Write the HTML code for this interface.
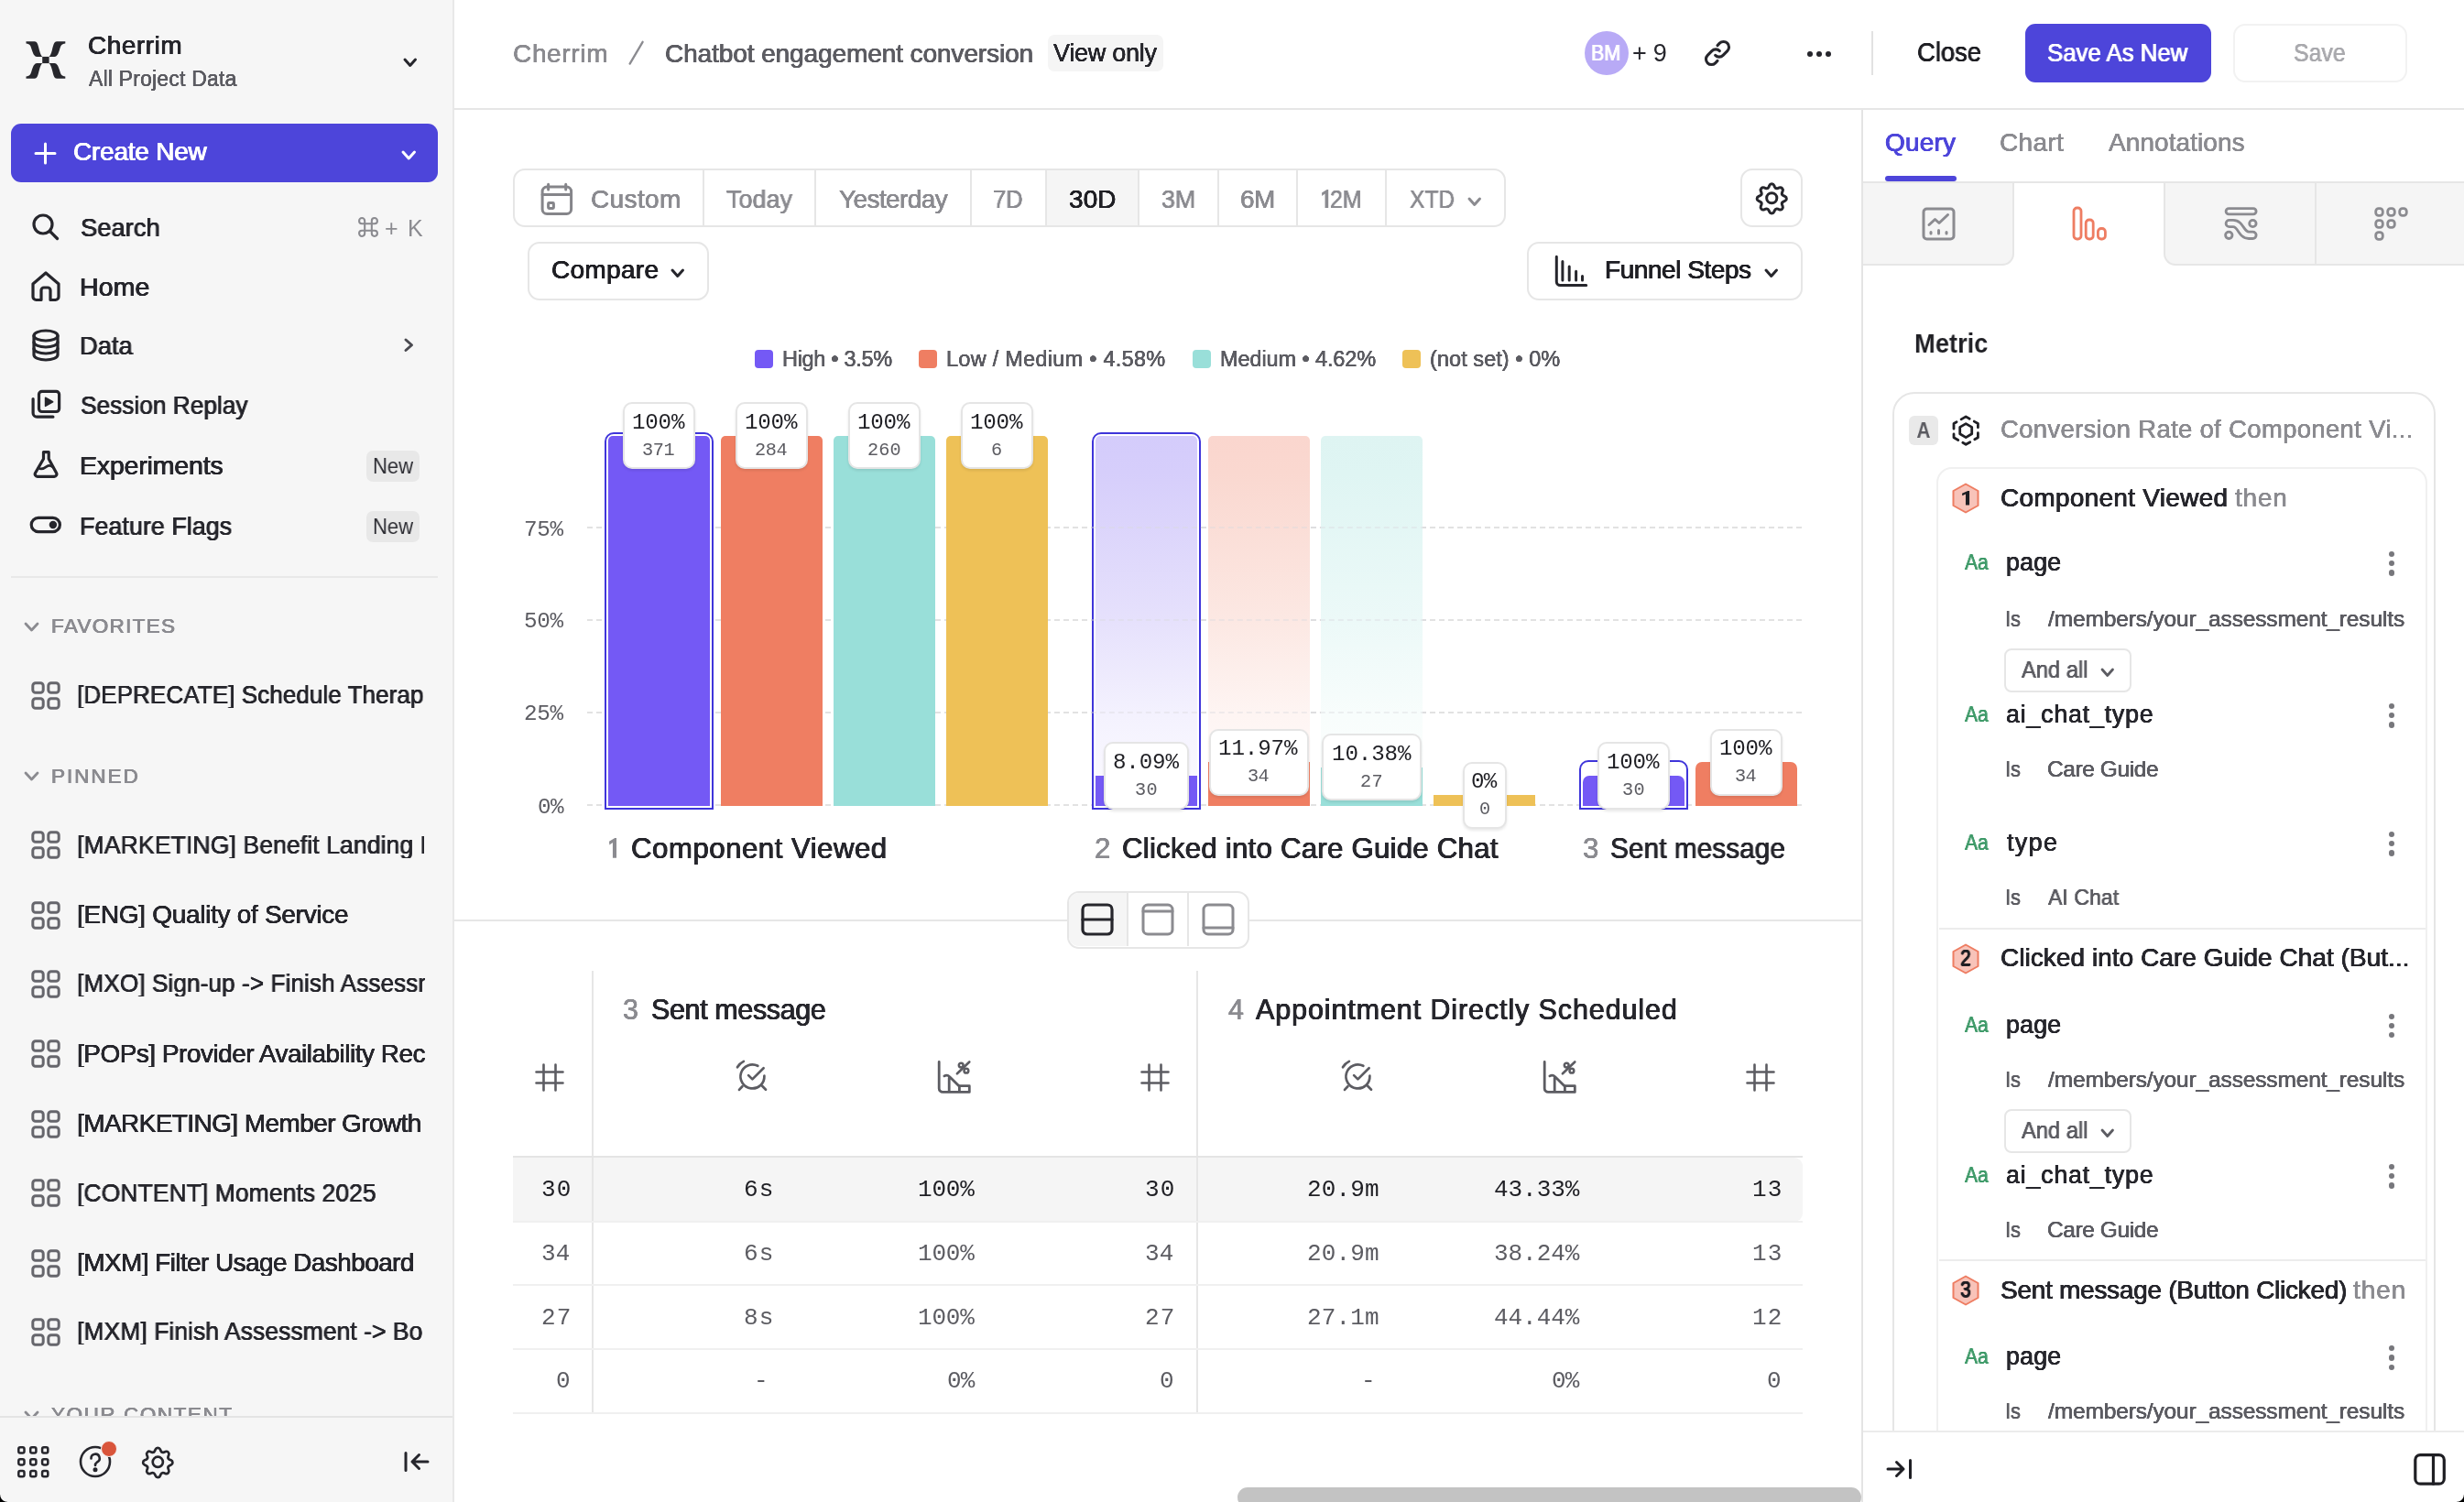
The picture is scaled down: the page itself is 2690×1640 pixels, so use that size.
<!DOCTYPE html>
<html lang="en"><head><meta charset="utf-8"><title>Chatbot engagement conversion</title>
<style>
html,body{margin:0;padding:0;}
html{width:2690px;height:1640px;overflow:hidden;}
body{width:2690px;height:1640px;position:relative;overflow:hidden;background:#fff;
font-family:"Liberation Sans",sans-serif;}
.a{position:absolute;}
.t{will-change:transform;position:absolute;white-space:pre;line-height:1;font-family:"Liberation Sans",sans-serif;}
.m{font-family:"Liberation Mono",monospace;}
svg{overflow:visible;}
</style></head><body>
<div class="a" style="left:0px;top:0px;width:494px;height:1640px;background:#f6f6f6;"></div>
<div class="a" style="left:494px;top:0px;width:2px;height:1640px;background:#e8e8e8;"></div>
<svg class="a" style="left:28.2px;top:45px;" width="43.8" height="41" viewBox="0 0 43.8 41" fill="#27272c"><path d="M0.5 0.3 H9.6 C13.2 0.3 13.6 5 15 10 C16 13.6 17 16 18.3 17 H12.4 C9 16.6 8 13 6.8 9.5 C5.6 5.2 5 2.9 0.5 2.5 Z"/><g transform="translate(43.8 0) scale(-1 1)"><path d="M0.5 0.3 H9.6 C13.2 0.3 13.6 5 15 10 C16 13.6 17 16 18.3 17 H12.4 C9 16.6 8 13 6.8 9.5 C5.6 5.2 5 2.9 0.5 2.5 Z"/></g><g transform="translate(0 41) scale(1 -1)"><path d="M0.5 0.3 H9.6 C13.2 0.3 13.6 5 15 10 C16 13.6 17 16 18.3 17 H12.4 C9 16.6 8 13 6.8 9.5 C5.6 5.2 5 2.9 0.5 2.5 Z"/></g><g transform="translate(43.8 41) scale(-1 -1)"><path d="M0.5 0.3 H9.6 C13.2 0.3 13.6 5 15 10 C16 13.6 17 16 18.3 17 H12.4 C9 16.6 8 13 6.8 9.5 C5.6 5.2 5 2.9 0.5 2.5 Z"/></g><rect x="18.2" y="16.9" width="7.4" height="7.2"/></svg>
<svg class="a" style="left:439.25px;top:61.75px;" width="17.5" height="12.5" viewBox="0 0 17.5 12.5" fill="none" stroke="#26262c" stroke-width="3" stroke-linecap="round" stroke-linejoin="round"><path d="M3 3 L8.75 9.5 L14.5 3"/></svg>
<div class="a" style="left:12px;top:135px;width:466px;height:64px;background:#4d45da;border-radius:11px;"></div>
<svg class="a" style="left:38px;top:156px;" width="23" height="23" viewBox="0 0 23 23" fill="none" stroke="#fff" stroke-width="3" stroke-linecap="round" stroke-linejoin="round"><path d="M11.5 1 V22 M1 11.5 H22"/></svg>
<svg class="a" style="left:436.75px;top:163.0px;" width="18.5" height="13" viewBox="0 0 18.5 13" fill="none" stroke="#fff" stroke-width="3" stroke-linecap="round" stroke-linejoin="round"><path d="M3 3 L9.25 10 L15.5 3"/></svg>
<svg class="a" style="left:35px;top:233px;" width="30" height="30" viewBox="0 0 30 30" fill="none" stroke="#26262c" stroke-width="3.2" stroke-linecap="round" stroke-linejoin="round"><circle cx="12" cy="12" r="10"/><path d="M19.5 19.5 L27.5 27.5"/></svg>
<svg class="a" style="left:389.5px;top:235.5px;" width="24" height="24" viewBox="0 0 22 22" fill="none" stroke="#8b8b90" stroke-width="1.9" stroke-linecap="round" stroke-linejoin="round"><path d="M7.5 7.5 H14.5 V14.5 H7.5 Z M7.5 7.5 V4.7 A2.8 2.8 0 1 0 4.7 7.5 H7.5 M14.5 7.5 H17.3 A2.8 2.8 0 1 0 14.5 4.7 V7.5 M14.5 14.5 V17.3 A2.8 2.8 0 1 0 17.3 14.5 H14.5 M7.5 14.5 H4.7 A2.8 2.8 0 1 0 7.5 17.3 V14.5"/></svg>
<svg class="a" style="left:33px;top:295px;" width="34" height="36" viewBox="0 0 34 36" fill="none" stroke="#26262c" stroke-width="3.2" stroke-linecap="round" stroke-linejoin="round"><path d="M3 15 L17 3 L31 15 V29 A3.5 3.5 0 0 1 27.5 32.5 H22 V22 A3 3 0 0 0 19 19 H15 A3 3 0 0 0 12 22 V32.5 H6.5 A3.5 3.5 0 0 1 3 29 Z"/></svg>
<svg class="a" style="left:34px;top:359px;" width="32" height="36" viewBox="0 0 32 36" fill="none" stroke="#26262c" stroke-width="3.2" stroke-linecap="round" stroke-linejoin="round"><ellipse cx="16" cy="7.5" rx="13" ry="5.5"/><path d="M3 7.5 V28.5 C3 31.5 8.8 34 16 34 S29 31.5 29 28.5 V7.5"/><path d="M3 14.5 C3 17.5 8.8 20 16 20 S29 17.5 29 14.5"/><path d="M3 21.5 C3 24.5 8.8 27 16 27 S29 24.5 29 21.5"/></svg>
<svg class="a" style="left:439.75px;top:368.25px;" width="12.5" height="17.5" viewBox="0 0 12.5 17.5" fill="none" stroke="#4a4a50" stroke-width="3" stroke-linecap="round" stroke-linejoin="round"><path d="M3 3 L9.5 8.75 L3 14.5"/></svg>
<svg class="a" style="left:33px;top:424px;" width="36" height="36" viewBox="0 0 36 36" fill="none" stroke="#26262c" stroke-width="3.2" stroke-linecap="round" stroke-linejoin="round"><rect x="9.5" y="3.4" width="22.1" height="22.1" rx="3.2"/><path d="M16.6 10.3 L24.6 14.8 L16.6 19.3 Z" fill="#26262c" stroke-width="1.6"/><path d="M3.1 11.5 V27 A4.2 4.2 0 0 0 7.3 31.2 H24.9"/></svg>
<svg class="a" style="left:34px;top:490px;" width="32" height="34" viewBox="0 0 32 34" fill="none" stroke="#26262c" stroke-width="3.2" stroke-linecap="round" stroke-linejoin="round"><path d="M13.5 3.6 H19.2 V11 L27.6 26.5 A2.6 2.6 0 0 1 25.3 30.3 H6.8 A2.6 2.6 0 0 1 4.5 26.5 L13.5 11 Z"/><path d="M8.2 21 C11 23.2 14 21.5 17 19.3 C19 18 21.5 18.3 23.6 20" stroke-width="2.8"/></svg>
<svg class="a" style="left:32px;top:563px;" width="36" height="22" viewBox="0 0 36 22" fill="none" stroke="#26262c" stroke-width="3.2" stroke-linecap="round" stroke-linejoin="round"><rect x="2.2" y="2.3" width="31.2" height="15.4" rx="7.7"/><circle cx="25.9" cy="10" r="4.2" fill="#26262c" stroke="none"/></svg>
<div class="a" style="left:400px;top:492.3px;width:58px;height:33.8px;background:#e8e8e8;border-radius:7px;"></div>
<div class="a" style="left:400px;top:558.1px;width:58px;height:33.8px;background:#e8e8e8;border-radius:7px;"></div>
<div class="a" style="left:12px;top:628.5px;width:466px;height:2px;background:#e8e8e8;"></div>
<svg class="a" style="left:24.5px;top:677.5px;" width="19" height="13" viewBox="0 0 19 13" fill="none" stroke="#8b8b90" stroke-width="2.8" stroke-linecap="round" stroke-linejoin="round"><path d="M3 3 L9.5 10 L16 3"/></svg>
<svg class="a" style="left:24.5px;top:841.2px;" width="19" height="13" viewBox="0 0 19 13" fill="none" stroke="#8b8b90" stroke-width="2.8" stroke-linecap="round" stroke-linejoin="round"><path d="M3 3 L9.5 10 L16 3"/></svg>
<svg class="a" style="left:34px;top:743.8px;" width="32" height="31" viewBox="0 0 32 31" fill="none" stroke="#66666c" stroke-width="3" stroke-linecap="round" stroke-linejoin="round"><rect x="1.8" y="1.8" width="11.4" height="10.4" rx="3"/><rect x="18.8" y="1.8" width="11.4" height="10.4" rx="3"/><rect x="1.8" y="18.8" width="11.4" height="10.4" rx="3"/><rect x="18.8" y="18.8" width="11.4" height="10.4" rx="3"/></svg>
<svg class="a" style="left:34px;top:907.3px;" width="32" height="31" viewBox="0 0 32 31" fill="none" stroke="#66666c" stroke-width="3" stroke-linecap="round" stroke-linejoin="round"><rect x="1.8" y="1.8" width="11.4" height="10.4" rx="3"/><rect x="18.8" y="1.8" width="11.4" height="10.4" rx="3"/><rect x="1.8" y="18.8" width="11.4" height="10.4" rx="3"/><rect x="18.8" y="18.8" width="11.4" height="10.4" rx="3"/></svg>
<svg class="a" style="left:34px;top:983.5px;" width="32" height="31" viewBox="0 0 32 31" fill="none" stroke="#66666c" stroke-width="3" stroke-linecap="round" stroke-linejoin="round"><rect x="1.8" y="1.8" width="11.4" height="10.4" rx="3"/><rect x="18.8" y="1.8" width="11.4" height="10.4" rx="3"/><rect x="1.8" y="18.8" width="11.4" height="10.4" rx="3"/><rect x="18.8" y="18.8" width="11.4" height="10.4" rx="3"/></svg>
<svg class="a" style="left:34px;top:1059px;" width="32" height="31" viewBox="0 0 32 31" fill="none" stroke="#66666c" stroke-width="3" stroke-linecap="round" stroke-linejoin="round"><rect x="1.8" y="1.8" width="11.4" height="10.4" rx="3"/><rect x="18.8" y="1.8" width="11.4" height="10.4" rx="3"/><rect x="1.8" y="18.8" width="11.4" height="10.4" rx="3"/><rect x="18.8" y="18.8" width="11.4" height="10.4" rx="3"/></svg>
<svg class="a" style="left:34px;top:1135.3px;" width="32" height="31" viewBox="0 0 32 31" fill="none" stroke="#66666c" stroke-width="3" stroke-linecap="round" stroke-linejoin="round"><rect x="1.8" y="1.8" width="11.4" height="10.4" rx="3"/><rect x="18.8" y="1.8" width="11.4" height="10.4" rx="3"/><rect x="1.8" y="18.8" width="11.4" height="10.4" rx="3"/><rect x="18.8" y="18.8" width="11.4" height="10.4" rx="3"/></svg>
<svg class="a" style="left:34px;top:1211.9px;" width="32" height="31" viewBox="0 0 32 31" fill="none" stroke="#66666c" stroke-width="3" stroke-linecap="round" stroke-linejoin="round"><rect x="1.8" y="1.8" width="11.4" height="10.4" rx="3"/><rect x="18.8" y="1.8" width="11.4" height="10.4" rx="3"/><rect x="1.8" y="18.8" width="11.4" height="10.4" rx="3"/><rect x="18.8" y="18.8" width="11.4" height="10.4" rx="3"/></svg>
<svg class="a" style="left:34px;top:1287.4px;" width="32" height="31" viewBox="0 0 32 31" fill="none" stroke="#66666c" stroke-width="3" stroke-linecap="round" stroke-linejoin="round"><rect x="1.8" y="1.8" width="11.4" height="10.4" rx="3"/><rect x="18.8" y="1.8" width="11.4" height="10.4" rx="3"/><rect x="1.8" y="18.8" width="11.4" height="10.4" rx="3"/><rect x="18.8" y="18.8" width="11.4" height="10.4" rx="3"/></svg>
<svg class="a" style="left:34px;top:1363.6px;" width="32" height="31" viewBox="0 0 32 31" fill="none" stroke="#66666c" stroke-width="3" stroke-linecap="round" stroke-linejoin="round"><rect x="1.8" y="1.8" width="11.4" height="10.4" rx="3"/><rect x="18.8" y="1.8" width="11.4" height="10.4" rx="3"/><rect x="1.8" y="18.8" width="11.4" height="10.4" rx="3"/><rect x="18.8" y="18.8" width="11.4" height="10.4" rx="3"/></svg>
<svg class="a" style="left:34px;top:1439px;" width="32" height="31" viewBox="0 0 32 31" fill="none" stroke="#66666c" stroke-width="3" stroke-linecap="round" stroke-linejoin="round"><rect x="1.8" y="1.8" width="11.4" height="10.4" rx="3"/><rect x="18.8" y="1.8" width="11.4" height="10.4" rx="3"/><rect x="1.8" y="18.8" width="11.4" height="10.4" rx="3"/><rect x="18.8" y="18.8" width="11.4" height="10.4" rx="3"/></svg>
<div class="a" style="left:0;top:1520px;width:494px;height:26px;overflow:hidden;"><svg class="a" style="left:25px;top:19px" width="19" height="13" viewBox="0 0 19 13" fill="none" stroke="#8b8b90" stroke-width="2.8" stroke-linecap="round" stroke-linejoin="round"><path d="M3 3 L9.5 10 L16 3"/></svg><span class="t" style="left:55.7px;top:13.8px;font-size:22.5px;color:#8b8b90;letter-spacing:1.55px;text-shadow:0.35px 0 0 #8b8b90,-0.35px 0 0 #8b8b90,0 0.35px 0 #8b8b90,0 -0.35px 0 #8b8b90;">YOUR CONTENT</span></div>
<div class="a" style="left:0px;top:1546px;width:494px;height:2px;background:#e4e4e4;"></div>
<div class="a" style="left:0px;top:1548px;width:494px;height:92px;background:#f6f6f6;"></div>
<svg class="a" style="left:18.5px;top:1579px;" width="36" height="35" viewBox="0 0 36 35" fill="none" stroke="#26262c" stroke-width="2.5" stroke-linecap="round" stroke-linejoin="round"><rect x="1.3" y="1.3" width="6.2" height="6.2" rx="1.8"/><rect x="14.200000000000001" y="1.3" width="6.2" height="6.2" rx="1.8"/><rect x="27.1" y="1.3" width="6.2" height="6.2" rx="1.8"/><rect x="1.3" y="14.200000000000001" width="6.2" height="6.2" rx="1.8"/><rect x="14.200000000000001" y="14.200000000000001" width="6.2" height="6.2" rx="1.8"/><rect x="27.1" y="14.200000000000001" width="6.2" height="6.2" rx="1.8"/><rect x="1.3" y="27.1" width="6.2" height="6.2" rx="1.8"/><rect x="14.200000000000001" y="27.1" width="6.2" height="6.2" rx="1.8"/><rect x="27.1" y="27.1" width="6.2" height="6.2" rx="1.8"/></svg>
<svg class="a" style="left:86px;top:1578px;" width="36" height="36" viewBox="0 0 36 36" fill="none" stroke="#26262c" stroke-width="2.6" stroke-linecap="round" stroke-linejoin="round"><circle cx="18" cy="18" r="16"/><path d="M13.5 14.5 A4.6 4.6 0 1 1 20 18.5 C18.5 19.5 18 20.3 18 22"/><circle cx="18" cy="26.8" r="1.2" fill="#26262c"/></svg>
<div class="a" style="left:109.5px;top:1573px;width:18px;height:18px;background:#d9553b;border-radius:9px;border:1px solid #f6f6f6;box-sizing:border-box;"></div>
<svg class="a" style="left:153.7px;top:1577.8px;" width="36.6" height="36.6" viewBox="0 0 34 34" fill="none" stroke="#26262c" stroke-width="2.5" stroke-linecap="round" stroke-linejoin="round"><path d="M19.4 4.2 a2.6 2.6 0 0 0 -4.8 0 l-0.6 1.5 a2.6 2.6 0 0 1 -3.2 1.4 l-1.5 -0.6 a2.6 2.6 0 0 0 -3.4 3.4 l0.6 1.5 a2.6 2.6 0 0 1 -1.4 3.2 l-1.5 0.6 a2.6 2.6 0 0 0 0 4.8 l1.5 0.6 a2.6 2.6 0 0 1 1.4 3.2 l-0.6 1.5 a2.6 2.6 0 0 0 3.4 3.4 l1.5 -0.6 a2.6 2.6 0 0 1 3.2 1.4 l0.6 1.5 a2.6 2.6 0 0 0 4.8 0 l0.6 -1.5 a2.6 2.6 0 0 1 3.2 -1.4 l1.5 0.6 a2.6 2.6 0 0 0 3.4 -3.4 l-0.6 -1.5 a2.6 2.6 0 0 1 1.4 -3.2 l1.5 -0.6 a2.6 2.6 0 0 0 0 -4.8 l-1.5 -0.6 a2.6 2.6 0 0 1 -1.4 -3.2 l0.6 -1.5 a2.6 2.6 0 0 0 -3.4 -3.4 l-1.5 0.6 a2.6 2.6 0 0 1 -3.2 -1.4 Z"/><circle cx="17" cy="17" r="5.2"/></svg>
<svg class="a" style="left:441px;top:1585px;" width="28" height="22" viewBox="0 0 28 22" fill="none" stroke="#26262c" stroke-width="3" stroke-linecap="round" stroke-linejoin="round"><path d="M2 1.5 V20.5 M26 11 H9 M16.5 3.5 L9 11 L16.5 18.5"/></svg>
<div class="a" style="left:496px;top:118px;width:2194px;height:2px;background:#e6e6e6;"></div>
<svg class="a" style="left:685px;top:43px;" width="20" height="30" viewBox="0 0 20 30" fill="none" stroke="#8b8b90" stroke-width="2.3" stroke-linecap="round" stroke-linejoin="round"><path d="M16.6 2.8 L2.6 26.6"/></svg>
<div class="a" style="left:1143.8px;top:38px;width:126px;height:40px;background:#f5f5f5;border-radius:7px;"></div>
<div class="a" style="left:1729.8px;top:33.8px;width:48px;height:48px;background:#b8aaf6;border-radius:24px;"></div>
<svg class="a" style="left:1860px;top:43.2px;" width="30" height="30" viewBox="0 0 32 32" fill="none" stroke="#26262c" stroke-width="3.3" stroke-linecap="round" stroke-linejoin="round"><path d="M13.5 18.5 a6.3 6.3 0 0 0 9 0 l5 -5 a6.3 6.3 0 0 0 -9 -9 l-2.5 2.5"/><path d="M18.5 13.5 a6.3 6.3 0 0 0 -9 0 l-5 5 a6.3 6.3 0 0 0 9 9 l2.5 -2.5"/></svg>
<div class="a" style="left:1972.8999999999999px;top:55.8px;width:5.8px;height:5.8px;background:#26262c;border-radius:2.9px;"></div>
<div class="a" style="left:1983.0px;top:55.8px;width:5.8px;height:5.8px;background:#26262c;border-radius:2.9px;"></div>
<div class="a" style="left:1993.1px;top:55.8px;width:5.8px;height:5.8px;background:#26262c;border-radius:2.9px;"></div>
<div class="a" style="left:2043px;top:34px;width:2px;height:48px;background:#e2e2e2;"></div>
<div class="a" style="left:2211px;top:26px;width:203px;height:64px;background:#4d45da;border-radius:11px;"></div>
<div class="a" style="left:2438.2px;top:26px;width:190px;height:64px;background:#fff;border:2px solid #f2f2f2;box-sizing:border-box;border-radius:13px;"></div>
<div class="a" style="left:560px;top:183.8px;width:1084px;height:64px;background:#fff;border:2px solid #e6e6e6;box-sizing:border-box;border-radius:13px;"></div>
<div class="a" style="left:1142px;top:185.8px;width:100px;height:60px;background:#f5f5f5;"></div>
<div class="a" style="left:767px;top:185.5px;width:2px;height:60.5px;background:#e6e6e6;"></div>
<div class="a" style="left:888.8px;top:185.5px;width:2px;height:60.5px;background:#e6e6e6;"></div>
<div class="a" style="left:1059px;top:185.5px;width:2px;height:60.5px;background:#e6e6e6;"></div>
<div class="a" style="left:1140.8px;top:185.5px;width:2px;height:60.5px;background:#e6e6e6;"></div>
<div class="a" style="left:1241.8px;top:185.5px;width:2px;height:60.5px;background:#e6e6e6;"></div>
<div class="a" style="left:1329px;top:185.5px;width:2px;height:60.5px;background:#e6e6e6;"></div>
<div class="a" style="left:1415.3px;top:185.5px;width:2px;height:60.5px;background:#e6e6e6;"></div>
<div class="a" style="left:1511.8px;top:185.5px;width:2px;height:60.5px;background:#e6e6e6;"></div>
<svg class="a" style="left:589px;top:199px;" width="38" height="38" viewBox="0 0 38 38" fill="none" stroke="#85858a" stroke-width="3" stroke-linecap="round" stroke-linejoin="round"><rect x="3.1" y="5.1" width="31.5" height="29.4" rx="5"/><path d="M3.1 13.5 H34.6 M9.6 2.2 V8 M28.7 2.2 V8"/><rect x="9.6" y="22.6" width="5.8" height="5.8" rx="0.8"/></svg>
<svg class="a" style="left:1442.8px;top:207.0px;" width="8.2" height="20.9" viewBox="0 0 8.2 20.9"><path d="M7.20 0.00 L7.20 19.90 L3.54 19.90 L3.54 4.50 L0.30 6.91 L0.00 3.50 L5.59 0.00 Z" fill="#8b8b90"/></svg>
<svg class="a" style="left:1601.25px;top:213.75px;" width="17.5" height="12.5" viewBox="0 0 17.5 12.5" fill="none" stroke="#8b8b90" stroke-width="3" stroke-linecap="round" stroke-linejoin="round"><path d="M3 3 L8.75 9.5 L14.5 3"/></svg>
<div class="a" style="left:1900px;top:183.8px;width:68px;height:64px;background:#fff;border:2px solid #e6e6e6;box-sizing:border-box;border-radius:13px;"></div>
<svg class="a" style="left:1915.6px;top:198px;" width="36.5" height="36.5" viewBox="0 0 34 34" fill="none" stroke="#26262c" stroke-width="2.8" stroke-linecap="round" stroke-linejoin="round"><path d="M19.4 4.2 a2.6 2.6 0 0 0 -4.8 0 l-0.6 1.5 a2.6 2.6 0 0 1 -3.2 1.4 l-1.5 -0.6 a2.6 2.6 0 0 0 -3.4 3.4 l0.6 1.5 a2.6 2.6 0 0 1 -1.4 3.2 l-1.5 0.6 a2.6 2.6 0 0 0 0 4.8 l1.5 0.6 a2.6 2.6 0 0 1 1.4 3.2 l-0.6 1.5 a2.6 2.6 0 0 0 3.4 3.4 l1.5 -0.6 a2.6 2.6 0 0 1 3.2 1.4 l0.6 1.5 a2.6 2.6 0 0 0 4.8 0 l0.6 -1.5 a2.6 2.6 0 0 1 3.2 -1.4 l1.5 0.6 a2.6 2.6 0 0 0 3.4 -3.4 l-0.6 -1.5 a2.6 2.6 0 0 1 1.4 -3.2 l1.5 -0.6 a2.6 2.6 0 0 0 0 -4.8 l-1.5 -0.6 a2.6 2.6 0 0 1 -1.4 -3.2 l0.6 -1.5 a2.6 2.6 0 0 0 -3.4 -3.4 l-1.5 0.6 a2.6 2.6 0 0 1 -3.2 -1.4 Z"/><circle cx="17" cy="17" r="5.2"/></svg>
<div class="a" style="left:576px;top:263.8px;width:198px;height:64px;background:#fff;border:2px solid #e6e6e6;box-sizing:border-box;border-radius:13px;"></div>
<svg class="a" style="left:731.25px;top:292.25px;" width="17.5" height="12.5" viewBox="0 0 17.5 12.5" fill="none" stroke="#26262c" stroke-width="3" stroke-linecap="round" stroke-linejoin="round"><path d="M3 3 L8.75 9.5 L14.5 3"/></svg>
<div class="a" style="left:1667px;top:263.8px;width:301px;height:64px;background:#fff;border:2px solid #e6e6e6;box-sizing:border-box;border-radius:13px;"></div>
<svg class="a" style="left:1696px;top:278px;" width="38" height="37" viewBox="0 0 38 37" fill="none" stroke="#26262c" stroke-width="3" stroke-linecap="round" stroke-linejoin="round"><path d="M3.3 2.3 V29.6 A4 4 0 0 0 7.3 33.6 H35.7"/><path d="M9.9 7.5 V28 M17.2 13 V28 M24.6 18.3 V28 M31.5 23.4 V28" /></svg>
<svg class="a" style="left:1925.25px;top:292.25px;" width="17.5" height="12.5" viewBox="0 0 17.5 12.5" fill="none" stroke="#26262c" stroke-width="3" stroke-linecap="round" stroke-linejoin="round"><path d="M3 3 L8.75 9.5 L14.5 3"/></svg>
<div class="a" style="left:824px;top:382px;width:20px;height:20px;background:#7459f5;border-radius:4px;"></div>
<div class="a" style="left:1003px;top:382px;width:20px;height:20px;background:#ef7e62;border-radius:4px;"></div>
<div class="a" style="left:1302px;top:382px;width:20px;height:20px;background:#99dfd9;border-radius:4px;"></div>
<div class="a" style="left:1530.8px;top:382px;width:20px;height:20px;background:#eec157;border-radius:4px;"></div>
<div class="a" style="left:640.8px;top:574.8px;width:1326px;height:2px;background:repeating-linear-gradient(90deg,#e2e2e2 0 6px,transparent 6px 10px);"></div>
<div class="a" style="left:640.8px;top:675.6px;width:1326px;height:2px;background:repeating-linear-gradient(90deg,#e2e2e2 0 6px,transparent 6px 10px);"></div>
<div class="a" style="left:640.8px;top:776.6px;width:1326px;height:2px;background:repeating-linear-gradient(90deg,#e2e2e2 0 6px,transparent 6px 10px);"></div>
<div class="a" style="left:640.8px;top:878px;width:1326px;height:2px;background:repeating-linear-gradient(90deg,#e2e2e2 0 6px,transparent 6px 10px);"></div>
<div class="a" style="left:659.7px;top:471.90000000000003px;width:119.4px;height:412.2px;background:#fff;border:2px solid #3f35da;box-sizing:border-box;border-radius:10px 10px 0 0;"></div>
<div class="a" style="left:664px;top:475.8px;width:111px;height:404.2px;background:#7459f5;border-radius:5px 5px 0 0;"></div>
<div class="a" style="left:787px;top:475.8px;width:111px;height:404.2px;background:#ef7e62;border-radius:5px 5px 0 0;"></div>
<div class="a" style="left:910px;top:475.8px;width:111px;height:404.2px;background:#99dfd9;border-radius:5px 5px 0 0;"></div>
<div class="a" style="left:1033px;top:475.8px;width:111px;height:404.2px;background:#eec157;border-radius:5px 5px 0 0;"></div>
<div class="a" style="left:680.4px;top:439.2px;width:78.3px;height:73.2px;background:#fff;box-sizing:border-box;border:2px solid #e5e5e5;border-radius:10px;box-shadow:0 2px 3px rgba(0,0,0,0.09);z-index:3;"></div>
<div class="a" style="left:803.4px;top:439.2px;width:78.3px;height:73.2px;background:#fff;box-sizing:border-box;border:2px solid #e5e5e5;border-radius:10px;box-shadow:0 2px 3px rgba(0,0,0,0.09);z-index:3;"></div>
<div class="a" style="left:926.4px;top:439.2px;width:78.3px;height:73.2px;background:#fff;box-sizing:border-box;border:2px solid #e5e5e5;border-radius:10px;box-shadow:0 2px 3px rgba(0,0,0,0.09);z-index:3;"></div>
<div class="a" style="left:1049.3px;top:439.2px;width:78.3px;height:73.2px;background:#fff;box-sizing:border-box;border:2px solid #e5e5e5;border-radius:10px;box-shadow:0 2px 3px rgba(0,0,0,0.09);z-index:3;"></div>
<div class="a" style="left:1192.1000000000001px;top:472.1px;width:119.4px;height:412px;background:#fff;border:2px solid #3f35da;box-sizing:border-box;border-radius:10px 10px 0 0;"></div>
<div class="a" style="left:1196.4px;top:476px;width:111px;height:404px;background:linear-gradient(180deg,#d4ccfb 0%,#d6cefb 10%,#e6e1fc 50%,#f4f2fe 76%,#fcfbff 100%);border-radius:5px 5px 0 0;"></div>
<div class="a" style="left:1319px;top:476px;width:111px;height:404px;background:linear-gradient(180deg,#fad6ce 0%,#fad8d0 10%,#fce8e3 50%,#fef5f3 76%,#fffdfc 100%);border-radius:5px 5px 0 0;"></div>
<div class="a" style="left:1442px;top:476px;width:111px;height:404px;background:linear-gradient(180deg,#def4f2 0%,#dff5f3 10%,#ecf9f8 50%,#f8fdfc 76%,#fefefe 100%);border-radius:5px 5px 0 0;"></div>
<div class="a" style="left:1192px;top:574.8px;width:365px;height:2px;opacity:.4;background:repeating-linear-gradient(90deg,#d9d9de 0 6px,transparent 6px 10px);background-position:-1.2px 0;"></div>
<div class="a" style="left:1192px;top:675.6px;width:365px;height:2px;opacity:.4;background:repeating-linear-gradient(90deg,#d9d9de 0 6px,transparent 6px 10px);background-position:-1.2px 0;"></div>
<div class="a" style="left:1192px;top:776.6px;width:365px;height:2px;opacity:.4;background:repeating-linear-gradient(90deg,#d9d9de 0 6px,transparent 6px 10px);background-position:-1.2px 0;"></div>
<div class="a" style="left:1196.4px;top:847px;width:111px;height:33px;background:#7459f5;border-radius:0px 0px 0 0;"></div>
<div class="a" style="left:1319px;top:832px;width:111px;height:48px;background:#ef7e62;border-radius:0px 0px 0 0;"></div>
<div class="a" style="left:1442px;top:838px;width:111px;height:42px;background:#99dfd9;border-radius:0px 0px 0 0;"></div>
<div class="a" style="left:1564.6px;top:868px;width:111px;height:12px;background:#eec157;border-radius:0px 0px 0 0;"></div>
<div class="a" style="left:1205.1px;top:810.4px;width:92.9px;height:73.2px;background:#fff;box-sizing:border-box;border:2px solid #e5e5e5;border-radius:10px;box-shadow:0 2px 3px rgba(0,0,0,0.09);z-index:3;"></div>
<div class="a" style="left:1320.0px;top:795.6px;width:108.6px;height:73.2px;background:#fff;box-sizing:border-box;border:2px solid #e5e5e5;border-radius:10px;box-shadow:0 2px 3px rgba(0,0,0,0.09);z-index:3;"></div>
<div class="a" style="left:1443.2px;top:801.3px;width:108.6px;height:73.2px;background:#fff;box-sizing:border-box;border:2px solid #e5e5e5;border-radius:10px;box-shadow:0 2px 3px rgba(0,0,0,0.09);z-index:3;"></div>
<div class="a" style="left:1596.8px;top:831.5px;width:47.8px;height:73.2px;background:#fff;box-sizing:border-box;border:2px solid #e5e5e5;border-radius:10px;box-shadow:0 2px 3px rgba(0,0,0,0.09);z-index:3;"></div>
<div class="a" style="left:1723.7px;top:830.4px;width:119.4px;height:53.700000000000045px;background:#fff;border:2px solid #3f35da;box-sizing:border-box;border-radius:10px 10px 0 0;"></div>
<div class="a" style="left:1728px;top:847px;width:111px;height:33px;background:#7459f5;border-radius:7px 7px 0 0;"></div>
<div class="a" style="left:1851px;top:832px;width:111px;height:48px;background:#ef7e62;border-radius:7px 7px 0 0;"></div>
<div class="a" style="left:1744.3px;top:810.4px;width:78.3px;height:73.2px;background:#fff;box-sizing:border-box;border:2px solid #e5e5e5;border-radius:10px;box-shadow:0 2px 3px rgba(0,0,0,0.09);z-index:3;"></div>
<div class="a" style="left:1867.3px;top:795.6px;width:78.3px;height:73.2px;background:#fff;box-sizing:border-box;border:2px solid #e5e5e5;border-radius:10px;box-shadow:0 2px 3px rgba(0,0,0,0.09);z-index:3;"></div>
<svg class="a" style="left:665.0px;top:915.2px;" width="9.0" height="22.7" viewBox="0 0 9.0 22.7"><path d="M8.01 0.00 L8.01 21.70 L3.94 21.70 L3.94 4.90 L0.33 7.53 L0.00 3.82 L6.22 0.00 Z" fill="#8b8b90"/></svg>
<div class="a" style="left:496px;top:1004px;width:1536px;height:2px;background:#e6e6e6;"></div>
<div class="a" style="left:1164.5px;top:972.5px;width:199.5px;height:63.5px;background:#fff;border:2px solid #e6e6e6;box-sizing:border-box;border-radius:13px;"></div>
<div class="a" style="left:1167px;top:975px;width:64px;height:58px;background:#f5f5f5;border-radius:10px 0 0 10px;"></div>
<div class="a" style="left:1230px;top:975px;width:2px;height:58px;background:#e6e6e6;"></div>
<div class="a" style="left:1296px;top:975px;width:2px;height:58px;background:#e6e6e6;"></div>
<svg class="a" style="left:1179.5px;top:986px;" width="36" height="36" viewBox="0 0 36 36" fill="none" stroke="#26262c" stroke-width="3.2" stroke-linecap="round" stroke-linejoin="round"><rect x="2" y="2" width="32" height="32" rx="5"/><path d="M2 18 H34"/></svg>
<svg class="a" style="left:1245.5px;top:986px;" width="36" height="36" viewBox="0 0 36 36" fill="none" stroke="#8b8b90" stroke-width="3" stroke-linecap="round" stroke-linejoin="round"><rect x="2" y="2" width="32" height="32" rx="5"/><path d="M2 9 H34"/></svg>
<svg class="a" style="left:1311.5px;top:986px;" width="36" height="36" viewBox="0 0 36 36" fill="none" stroke="#8b8b90" stroke-width="3" stroke-linecap="round" stroke-linejoin="round"><rect x="2" y="2" width="32" height="32" rx="5"/><path d="M2 27 H34"/></svg>
<div class="a" style="left:560px;top:1264px;width:1408px;height:70px;background:#f5f5f5;border-radius:0 9px 9px 0;"></div>
<div class="a" style="left:646px;top:1060px;width:2px;height:484px;background:#e6e6e6;"></div>
<div class="a" style="left:1306px;top:1060px;width:2px;height:484px;background:#e6e6e6;"></div>
<div class="a" style="left:560px;top:1261.5px;width:1408px;height:2px;background:#e4e4e4;"></div>
<div class="a" style="left:560px;top:1332.5px;width:1408px;height:2px;background:#f0f0f0;"></div>
<div class="a" style="left:560px;top:1402px;width:1408px;height:2px;background:#f0f0f0;"></div>
<div class="a" style="left:560px;top:1472px;width:1408px;height:2px;background:#f0f0f0;"></div>
<div class="a" style="left:560px;top:1541.5px;width:1408px;height:2px;background:#f0f0f0;"></div>
<svg class="a" style="left:584px;top:1161px;" width="32" height="31" viewBox="0 0 32 31" fill="none" stroke="#5c5c62" stroke-width="2.6" stroke-linecap="round" stroke-linejoin="round"><path d="M9.5 1.5 V29.5 M22.5 1.5 V29.5 M1.5 9.5 H30.5 M1.5 21.5 H30.5"/></svg>
<svg class="a" style="left:803px;top:1157px;" width="35" height="35" viewBox="0 0 35 35" fill="none" stroke="#5c5c62" stroke-width="2.7" stroke-linecap="round" stroke-linejoin="round"><path d="M24.3 6.8 A13 13 0 1 0 31.4 17.7"/><path d="M14.1 17.1 L18.4 21.4 L30.6 9.2"/><path d="M7.4 29.3 L4 32.9 M29.1 28.7 L33 32.7 M2 8.3 Q4.5 4 8.9 1.9"/></svg>
<svg class="a" style="left:1021.5px;top:1158px;" width="38" height="36" viewBox="0 0 38 36" fill="none" stroke="#5c5c62" stroke-width="2.8" stroke-linecap="round" stroke-linejoin="round"><path d="M3.2 1.5 V30.4 a4 4 0 0 0 4 4 H36.3 V27.7 H25.4 V34.4 M14.2 19 V34.4 M8.9 16.9 Q12 14.9 15 17.9 L25.4 28.3"/><path d="M22.9 14.3 L36.3 1.5" stroke-width="2.6"/><circle cx="27.2" cy="5.1" r="2.4" stroke-width="2.5"/><circle cx="32.9" cy="11.2" r="2.4" stroke-width="2.5"/></svg>
<svg class="a" style="left:1244.5px;top:1161px;" width="32" height="31" viewBox="0 0 32 31" fill="none" stroke="#5c5c62" stroke-width="2.6" stroke-linecap="round" stroke-linejoin="round"><path d="M9.5 1.5 V29.5 M22.5 1.5 V29.5 M1.5 9.5 H30.5 M1.5 21.5 H30.5"/></svg>
<svg class="a" style="left:1464px;top:1157px;" width="35" height="35" viewBox="0 0 35 35" fill="none" stroke="#5c5c62" stroke-width="2.7" stroke-linecap="round" stroke-linejoin="round"><path d="M24.3 6.8 A13 13 0 1 0 31.4 17.7"/><path d="M14.1 17.1 L18.4 21.4 L30.6 9.2"/><path d="M7.4 29.3 L4 32.9 M29.1 28.7 L33 32.7 M2 8.3 Q4.5 4 8.9 1.9"/></svg>
<svg class="a" style="left:1682.5px;top:1158px;" width="38" height="36" viewBox="0 0 38 36" fill="none" stroke="#5c5c62" stroke-width="2.8" stroke-linecap="round" stroke-linejoin="round"><path d="M3.2 1.5 V30.4 a4 4 0 0 0 4 4 H36.3 V27.7 H25.4 V34.4 M14.2 19 V34.4 M8.9 16.9 Q12 14.9 15 17.9 L25.4 28.3"/><path d="M22.9 14.3 L36.3 1.5" stroke-width="2.6"/><circle cx="27.2" cy="5.1" r="2.4" stroke-width="2.5"/><circle cx="32.9" cy="11.2" r="2.4" stroke-width="2.5"/></svg>
<svg class="a" style="left:1905.5px;top:1161px;" width="32" height="31" viewBox="0 0 32 31" fill="none" stroke="#5c5c62" stroke-width="2.6" stroke-linecap="round" stroke-linejoin="round"><path d="M9.5 1.5 V29.5 M22.5 1.5 V29.5 M1.5 9.5 H30.5 M1.5 21.5 H30.5"/></svg>
<div class="a" style="left:1351px;top:1624px;width:681px;height:16px;overflow:hidden;"><div class="a" style="left:0;top:0;width:681px;height:22px;background:#c3c3c3;border-radius:11px;"></div></div>
<div class="a" style="left:2032px;top:120px;width:2px;height:1520px;background:#e4e4e4;"></div>
<div class="a" style="left:2058px;top:192px;width:77.5px;height:6px;background:#4d45da;border-radius:3px;"></div>
<div class="a" style="left:2034px;top:198px;width:656px;height:2px;background:#e6e6e6;"></div>
<div class="a" style="left:2034px;top:200px;width:165px;height:90px;background:#f5f5f5;border-radius:0 0 13px 0;border-right:2px solid #e6e6e6;border-bottom:2px solid #e6e6e6;box-sizing:border-box;"></div>
<div class="a" style="left:2361.5px;top:200px;width:328.5px;height:90px;background:#f5f5f5;border-radius:0 0 0 13px;border-left:2px solid #e6e6e6;border-bottom:2px solid #e6e6e6;box-sizing:border-box;"></div>
<div class="a" style="left:2527px;top:200px;width:2px;height:88px;background:#e6e6e6;"></div>
<svg class="a" style="left:2097.5px;top:225.5px;" width="37" height="37" viewBox="0 0 37 37" fill="none" stroke="#8b8b90" stroke-width="3" stroke-linecap="round" stroke-linejoin="round"><rect x="2" y="2" width="33" height="33" rx="3.5"/><path d="M8 19.5 L14.5 13.5 L19 17.5 L28.5 8.5"/><path d="M10 27.5 V29 M18.5 25.5 V29 M27 27.5 V29"/></svg>
<svg class="a" style="left:2261.5px;top:225px;" width="39" height="38" viewBox="0 0 39 38" fill="none" stroke="#ee7d62" stroke-width="2.8" stroke-linecap="round" stroke-linejoin="round"><rect x="2" y="2" width="8" height="34" rx="3.5"/><rect x="15.2" y="15" width="8" height="21" rx="3.5"/><rect x="28.4" y="24.5" width="8" height="11.5" rx="3.5"/></svg>
<svg class="a" style="left:2426.5px;top:225px;" width="39" height="38" viewBox="0 0 39 38" fill="none" stroke="#8b8b90" stroke-width="2.8" stroke-linecap="round" stroke-linejoin="round"><rect x="3.1" y="2.7" width="33" height="6.2" rx="3.1"/><circle cx="32.4" cy="19" r="3.7"/><circle cx="6.3" cy="31.8" r="3.7"/><path d="M6.8 19 H11 C19.5 19 19.5 31.8 28 31.8 H32.4" stroke-width="10.2"/><path d="M6.8 19 H11 C19.5 19 19.5 31.8 28 31.8 H32.4" stroke="#f5f5f5" stroke-width="4.6"/></svg>
<svg class="a" style="left:2592px;top:225.5px;" width="37" height="37" viewBox="0 0 37 37" fill="none" stroke="#8b8b90" stroke-width="2.8" stroke-linecap="round" stroke-linejoin="round"><rect x="1.7000000000000002" y="1.7000000000000002" width="7.6" height="7.6" rx="3"/><rect x="14.7" y="1.7000000000000002" width="7.6" height="7.6" rx="3"/><rect x="27.7" y="1.7000000000000002" width="7.6" height="7.6" rx="3"/><rect x="1.7000000000000002" y="14.7" width="7.6" height="7.6" rx="3"/><rect x="14.7" y="14.7" width="7.6" height="7.6" rx="3"/><rect x="1.7000000000000002" y="27.7" width="7.6" height="7.6" rx="3"/></svg>
<div class="a" style="left:2066px;top:428px;width:593.3px;height:1160px;background:#fff;border:2px solid #e6e6e6;box-sizing:border-box;border-radius:24px;"></div>
<div class="a" style="left:2084px;top:454px;width:32px;height:31.5px;background:#e9e9e9;border-radius:6px;"></div>
<span class="t" style="left:2089.8px;top:458.3px;width:20px;text-align:center;font-size:24px;font-weight:bold;color:#5a5a60;transform:scaleX(0.86);">A</span>
<svg class="a" style="left:2128.5px;top:453px;" width="34" height="34" viewBox="0 0 34 34" fill="none" stroke="#1f1f24" stroke-width="2.8" stroke-linecap="round" stroke-linejoin="round"><path d="M17.2 1.9 L30.4 9.5 V24.7 L17.2 32.3 L4 24.7 V9.5 Z" stroke-dasharray="9.2 5.8" stroke-dashoffset="4.6"/><path d="M17.2 9.6 L23.7 13.4 V20.8 L17.2 24.6 L10.7 20.8 V13.4 Z"/></svg>
<div class="a" style="left:2114px;top:510.3px;width:535.6px;height:1080px;background:#fff;border:2px solid #f0f0f0;box-sizing:border-box;border-radius:17px;"></div>
<svg class="a" style="left:2130px;top:527px;" width="32" height="34" viewBox="0 0 32 34" fill="#f8c3b9" stroke="#ee7d62" stroke-width="2" stroke-linecap="round" stroke-linejoin="round"><path d="M16 1.5 L29.5 9 V25 L16 32.5 L2.5 25 V9 Z"/></svg>
<svg class="a" style="left:2142.0px;top:536.3px;" width="9.1" height="16.4" viewBox="0 0 9.1 16.4"><path d="M8.08 0.00 L8.08 15.40 L3.97 15.40 L3.97 3.48 L0.33 5.34 L0.00 2.71 L6.27 0.00 Z" fill="#1f1f24"/></svg>
<div class="a" style="left:2607.8px;top:601.8999999999999px;width:6.4px;height:6.4px;background:#77777c;border-radius:3.2px;"></div>
<div class="a" style="left:2607.8px;top:612.0999999999999px;width:6.4px;height:6.4px;background:#77777c;border-radius:3.2px;"></div>
<div class="a" style="left:2607.8px;top:622.3px;width:6.4px;height:6.4px;background:#77777c;border-radius:3.2px;"></div>
<div class="a" style="left:2188.2px;top:707.9px;width:138.6px;height:47.8px;background:#fff;border:2px solid #e6e6e6;box-sizing:border-box;border-radius:8px;"></div>
<svg class="a" style="left:2292.25px;top:727.75px;" width="17.5" height="12.5" viewBox="0 0 17.5 12.5" fill="none" stroke="#5c5c62" stroke-width="2.8" stroke-linecap="round" stroke-linejoin="round"><path d="M3 3 L8.75 9.5 L14.5 3"/></svg>
<div class="a" style="left:2607.8px;top:767.8999999999999px;width:6.4px;height:6.4px;background:#77777c;border-radius:3.2px;"></div>
<div class="a" style="left:2607.8px;top:778.0999999999999px;width:6.4px;height:6.4px;background:#77777c;border-radius:3.2px;"></div>
<div class="a" style="left:2607.8px;top:788.3px;width:6.4px;height:6.4px;background:#77777c;border-radius:3.2px;"></div>
<div class="a" style="left:2607.8px;top:907.8999999999999px;width:6.4px;height:6.4px;background:#77777c;border-radius:3.2px;"></div>
<div class="a" style="left:2607.8px;top:918.0999999999999px;width:6.4px;height:6.4px;background:#77777c;border-radius:3.2px;"></div>
<div class="a" style="left:2607.8px;top:928.3px;width:6.4px;height:6.4px;background:#77777c;border-radius:3.2px;"></div>
<div class="a" style="left:2116.7px;top:1013px;width:531px;height:2px;background:#ececec;"></div>
<svg class="a" style="left:2130px;top:1030px;" width="32" height="34" viewBox="0 0 32 34" fill="#f8c3b9" stroke="#ee7d62" stroke-width="2" stroke-linecap="round" stroke-linejoin="round"><path d="M16 1.5 L29.5 9 V25 L16 32.5 L2.5 25 V9 Z"/></svg>
<span class="t" style="left:2136.2px;top:1034.7px;width:20px;text-align:center;font-size:23.5px;text-shadow:0.6px 0 0 #1f1f24,-0.6px 0 0 #1f1f24,0 0.5px 0 #1f1f24,0 -0.5px 0 #1f1f24,0.4px 0.4px 0 #1f1f24,-0.4px -0.4px 0 #1f1f24;color:#1f1f24;transform:scaleX(0.88);">2</span>
<div class="a" style="left:2607.8px;top:1106.6px;width:6.4px;height:6.4px;background:#77777c;border-radius:3.2px;"></div>
<div class="a" style="left:2607.8px;top:1116.8px;width:6.4px;height:6.4px;background:#77777c;border-radius:3.2px;"></div>
<div class="a" style="left:2607.8px;top:1127.0px;width:6.4px;height:6.4px;background:#77777c;border-radius:3.2px;"></div>
<div class="a" style="left:2188.2px;top:1211.0px;width:138.6px;height:47.8px;background:#fff;border:2px solid #e6e6e6;box-sizing:border-box;border-radius:8px;"></div>
<svg class="a" style="left:2292.25px;top:1230.85px;" width="17.5" height="12.5" viewBox="0 0 17.5 12.5" fill="none" stroke="#5c5c62" stroke-width="2.8" stroke-linecap="round" stroke-linejoin="round"><path d="M3 3 L8.75 9.5 L14.5 3"/></svg>
<div class="a" style="left:2607.8px;top:1270.8px;width:6.4px;height:6.4px;background:#77777c;border-radius:3.2px;"></div>
<div class="a" style="left:2607.8px;top:1281.0px;width:6.4px;height:6.4px;background:#77777c;border-radius:3.2px;"></div>
<div class="a" style="left:2607.8px;top:1291.2px;width:6.4px;height:6.4px;background:#77777c;border-radius:3.2px;"></div>
<div class="a" style="left:2116.7px;top:1375px;width:531px;height:2px;background:#ececec;"></div>
<svg class="a" style="left:2130px;top:1392px;" width="32" height="34" viewBox="0 0 32 34" fill="#f8c3b9" stroke="#ee7d62" stroke-width="2" stroke-linecap="round" stroke-linejoin="round"><path d="M16 1.5 L29.5 9 V25 L16 32.5 L2.5 25 V9 Z"/></svg>
<span class="t" style="left:2136.2px;top:1396.7px;width:20px;text-align:center;font-size:23.5px;text-shadow:0.6px 0 0 #1f1f24,-0.6px 0 0 #1f1f24,0 0.5px 0 #1f1f24,0 -0.5px 0 #1f1f24,0.4px 0.4px 0 #1f1f24,-0.4px -0.4px 0 #1f1f24;color:#1f1f24;transform:scaleX(0.88);">3</span>
<div class="a" style="left:2607.8px;top:1469.1px;width:6.4px;height:6.4px;background:#77777c;border-radius:3.2px;"></div>
<div class="a" style="left:2607.8px;top:1479.3px;width:6.4px;height:6.4px;background:#77777c;border-radius:3.2px;"></div>
<div class="a" style="left:2607.8px;top:1489.5px;width:6.4px;height:6.4px;background:#77777c;border-radius:3.2px;"></div>
<div class="a" style="left:2034px;top:1562px;width:656px;height:78px;background:#fff;border-top:2px solid #ececec;box-sizing:border-box;z-index:5;"></div><svg class="a" style="left:2059px;top:1592px;z-index:6" width="30" height="24" viewBox="0 0 30 24" fill="none" stroke="#1f1f24" stroke-width="3" stroke-linecap="round" stroke-linejoin="round"><path d="M26.5 2.5 V21.5 M2 12 H19 M11.5 4.5 L19 12 L11.5 19.5"/></svg><svg class="a" style="left:2633.5px;top:1585.5px;z-index:6" width="38" height="38" viewBox="0 0 38 38" fill="none" stroke="#1f1f24" stroke-width="3.2" stroke-linecap="round" stroke-linejoin="round"><rect x="2.8" y="2.6" width="31.5" height="31.6" rx="5.5"/><path d="M22.5 2.6 V34.2"/></svg>
<div class="a" style="left:0;top:1632px;width:8px;height:8px;z-index:9;background:radial-gradient(circle at 8px 0,transparent 7.3px,#000 8.3px);"></div>
<div class="a" style="left:2682px;top:1632px;width:8px;height:8px;z-index:9;background:radial-gradient(circle at 0 0,transparent 7.3px,#000 8.3px);"></div>
<span class="t" style="left:96.0px;top:35.5px;font-size:28px;color:#26262c;letter-spacing:0.51px;text-shadow:0.40px 0 0 #26262c,-0.40px 0 0 #26262c,0 0.40px 0 #26262c,0 -0.40px 0 #26262c;">Cherrim</span>
<span class="t" style="left:96.5px;top:74.5px;font-size:23px;color:#5c5c62;letter-spacing:0.19px;text-shadow:0.10px 0 0 #5c5c62,-0.10px 0 0 #5c5c62,0 0.10px 0 #5c5c62,0 -0.10px 0 #5c5c62;">All Project Data</span>
<span class="t" style="left:79.5px;top:152.3px;font-size:28px;color:#fff;letter-spacing:-0.23px;text-shadow:0.45px 0 0 #fff,-0.45px 0 0 #fff,0 0.45px 0 #fff,0 -0.45px 0 #fff;">Create New</span>
<span class="t" style="left:88.0px;top:233.9px;font-size:28.5px;color:#26262c;text-shadow:0.40px 0 0 #26262c,-0.40px 0 0 #26262c,0 0.40px 0 #26262c,0 -0.40px 0 #26262c;transform:scaleX(0.9605);transform-origin:0 0;">Search</span>
<span class="t" style="left:87.0px;top:299.4px;font-size:28.5px;color:#26262c;letter-spacing:0.11px;text-shadow:0.40px 0 0 #26262c,-0.40px 0 0 #26262c,0 0.40px 0 #26262c,0 -0.40px 0 #26262c;">Home</span>
<span class="t" style="left:87.1px;top:362.9px;font-size:28.5px;color:#26262c;text-shadow:0.40px 0 0 #26262c,-0.40px 0 0 #26262c,0 0.40px 0 #26262c,0 -0.40px 0 #26262c;transform:scaleX(0.9597);transform-origin:0 0;">Data</span>
<span class="t" style="left:88.1px;top:427.9px;font-size:28.5px;color:#26262c;text-shadow:0.40px 0 0 #26262c,-0.40px 0 0 #26262c,0 0.40px 0 #26262c,0 -0.40px 0 #26262c;transform:scaleX(0.9218);transform-origin:0 0;">Session Replay</span>
<span class="t" style="left:87.0px;top:494.4px;font-size:28.5px;color:#26262c;letter-spacing:-0.17px;text-shadow:0.40px 0 0 #26262c,-0.40px 0 0 #26262c,0 0.40px 0 #26262c,0 -0.40px 0 #26262c;">Experiments</span>
<span class="t" style="left:87.1px;top:559.9px;font-size:28.5px;color:#26262c;text-shadow:0.40px 0 0 #26262c,-0.40px 0 0 #26262c,0 0.40px 0 #26262c,0 -0.40px 0 #26262c;transform:scaleX(0.9448);transform-origin:0 0;">Feature Flags</span>
<span class="t" style="left:420.0px;top:236.8px;font-size:25px;color:#8b8b90;letter-spacing:1.73px;">+ K</span>
<span class="t" style="left:406.6px;top:496.5px;font-size:24px;color:#2c2c32;transform:scaleX(0.9165);transform-origin:0 0;">New</span>
<span class="t" style="left:406.6px;top:562.5px;font-size:24px;color:#2c2c32;transform:scaleX(0.9165);transform-origin:0 0;">New</span>
<span class="t" style="left:56.0px;top:673.0px;font-size:22.5px;color:#8b8b90;letter-spacing:1.30px;text-shadow:0.38px 0 0 #8b8b90,-0.38px 0 0 #8b8b90,0 0.38px 0 #8b8b90,0 -0.38px 0 #8b8b90;">FAVORITES</span>
<span class="t" style="left:56.0px;top:836.7px;font-size:22.5px;color:#8b8b90;letter-spacing:1.95px;text-shadow:0.38px 0 0 #8b8b90,-0.38px 0 0 #8b8b90,0 0.38px 0 #8b8b90,0 -0.38px 0 #8b8b90;">PINNED</span>
<span class="t" style="left:83.6px;top:745.1px;font-size:28px;color:#26262c;text-shadow:0.30px 0 0 #26262c,-0.30px 0 0 #26262c,0 0.30px 0 #26262c,0 -0.30px 0 #26262c;transform:scaleX(0.9340);transform-origin:0 0;max-width:406.2px;overflow:hidden;">[DEPRECATE] Schedule Therap</span>
<span class="t" style="left:83.6px;top:908.6px;font-size:28px;color:#26262c;text-shadow:0.30px 0 0 #26262c,-0.30px 0 0 #26262c,0 0.30px 0 #26262c,0 -0.30px 0 #26262c;transform:scaleX(0.9553);transform-origin:0 0;max-width:397.2px;overflow:hidden;">[MARKETING] Benefit Landing Pa</span>
<span class="t" style="left:83.5px;top:984.8px;font-size:28px;color:#26262c;letter-spacing:-0.30px;text-shadow:0.30px 0 0 #26262c,-0.30px 0 0 #26262c,0 0.30px 0 #26262c,0 -0.30px 0 #26262c;max-width:379.5px;overflow:hidden;">[ENG] Quality of Service</span>
<span class="t" style="left:83.6px;top:1060.3px;font-size:28px;color:#26262c;text-shadow:0.30px 0 0 #26262c,-0.30px 0 0 #26262c,0 0.30px 0 #26262c,0 -0.30px 0 #26262c;transform:scaleX(0.9402);transform-origin:0 0;max-width:403.5px;overflow:hidden;">[MXO] Sign-up -&gt; Finish Assessm</span>
<span class="t" style="left:83.5px;top:1136.6px;font-size:28px;color:#26262c;letter-spacing:-0.51px;text-shadow:0.30px 0 0 #26262c,-0.30px 0 0 #26262c,0 0.30px 0 #26262c,0 -0.30px 0 #26262c;max-width:379.5px;overflow:hidden;">[POPs] Provider Availability Rec</span>
<span class="t" style="left:83.5px;top:1213.2px;font-size:28px;color:#26262c;letter-spacing:-0.59px;text-shadow:0.30px 0 0 #26262c,-0.30px 0 0 #26262c,0 0.30px 0 #26262c,0 -0.30px 0 #26262c;max-width:379.5px;overflow:hidden;">[MARKETING] Member Growth</span>
<span class="t" style="left:83.6px;top:1288.7px;font-size:28px;color:#26262c;text-shadow:0.30px 0 0 #26262c,-0.30px 0 0 #26262c,0 0.30px 0 #26262c,0 -0.30px 0 #26262c;transform:scaleX(0.9499);transform-origin:0 0;max-width:399.4px;overflow:hidden;">[CONTENT] Moments 2025</span>
<span class="t" style="left:83.5px;top:1364.9px;font-size:28px;color:#26262c;letter-spacing:-0.59px;text-shadow:0.30px 0 0 #26262c,-0.30px 0 0 #26262c,0 0.30px 0 #26262c,0 -0.30px 0 #26262c;max-width:379.5px;overflow:hidden;">[MXM] Filter Usage Dashboard</span>
<span class="t" style="left:83.6px;top:1440.3px;font-size:28px;color:#26262c;text-shadow:0.30px 0 0 #26262c,-0.30px 0 0 #26262c,0 0.30px 0 #26262c,0 -0.30px 0 #26262c;transform:scaleX(0.9492);transform-origin:0 0;max-width:399.7px;overflow:hidden;">[MXM] Finish Assessment -&gt; Bo</span>
<span class="t" style="left:559.5px;top:44.9px;font-size:28px;color:#8b8b90;letter-spacing:0.66px;text-shadow:0.25px 0 0 #8b8b90,-0.25px 0 0 #8b8b90,0 0.25px 0 #8b8b90,0 -0.25px 0 #8b8b90;">Cherrim</span>
<span class="t" style="left:725.6px;top:44.9px;font-size:28px;color:#5c5c62;letter-spacing:-0.09px;text-shadow:0.38px 0 0 #5c5c62,-0.38px 0 0 #5c5c62,0 0.38px 0 #5c5c62,0 -0.38px 0 #5c5c62;">Chatbot engagement conversion</span>
<span class="t" style="left:1150.0px;top:44.6px;font-size:27px;color:#26262c;letter-spacing:-0.25px;text-shadow:0.10px 0 0 #26262c,-0.10px 0 0 #26262c,0 0.10px 0 #26262c,0 -0.10px 0 #26262c;">View only</span>
<span class="t" style="left:1737.4px;top:45.7px;font-size:24px;color:#fff;text-shadow:0.45px 0 0 #fff,-0.45px 0 0 #fff,0 0.45px 0 #fff,0 -0.45px 0 #fff;transform:scaleX(0.8939);transform-origin:0 0;">BM</span>
<span class="t" style="left:1782.0px;top:45.1px;font-size:27px;color:#26262c;letter-spacing:-0.28px;">+ 9</span>
<span class="t" style="left:2093.1px;top:43.1px;font-size:29px;color:#1f1f24;text-shadow:0.30px 0 0 #1f1f24,-0.30px 0 0 #1f1f24,0 0.30px 0 #1f1f24,0 -0.30px 0 #1f1f24;transform:scaleX(0.9443);transform-origin:0 0;">Close</span>
<span class="t" style="left:2235.3px;top:43.9px;font-size:28px;color:#fff;text-shadow:0.45px 0 0 #fff,-0.45px 0 0 #fff,0 0.45px 0 #fff,0 -0.45px 0 #fff;transform:scaleX(0.9205);transform-origin:0 0;">Save As New</span>
<span class="t" style="left:2504.1px;top:43.9px;font-size:28px;color:#a9a9ad;text-shadow:0.15px 0 0 #a9a9ad,-0.15px 0 0 #a9a9ad,0 0.15px 0 #a9a9ad,0 -0.15px 0 #a9a9ad;transform:scaleX(0.8884);transform-origin:0 0;">Save</span>
<span class="t" style="left:645.0px;top:203.5px;font-size:28px;color:#8b8b90;letter-spacing:0.37px;text-shadow:0.30px 0 0 #8b8b90,-0.30px 0 0 #8b8b90,0 0.30px 0 #8b8b90,0 -0.30px 0 #8b8b90;">Custom</span>
<span class="t" style="left:793.0px;top:203.5px;font-size:28px;color:#8b8b90;text-shadow:0.30px 0 0 #8b8b90,-0.30px 0 0 #8b8b90,0 0.30px 0 #8b8b90,0 -0.30px 0 #8b8b90;transform:scaleX(0.9636);transform-origin:0 0;">Today</span>
<span class="t" style="left:915.5px;top:203.5px;font-size:28px;color:#8b8b90;letter-spacing:-0.60px;text-shadow:0.30px 0 0 #8b8b90,-0.30px 0 0 #8b8b90,0 0.30px 0 #8b8b90,0 -0.30px 0 #8b8b90;">Yesterday</span>
<span class="t" style="left:1083.7px;top:203.5px;font-size:28px;color:#8b8b90;text-shadow:0.30px 0 0 #8b8b90,-0.30px 0 0 #8b8b90,0 0.30px 0 #8b8b90,0 -0.30px 0 #8b8b90;transform:scaleX(0.9144);transform-origin:0 0;">7D</span>
<span class="t" style="left:1166.5px;top:203.5px;font-size:28px;color:#1f1f24;letter-spacing:0.08px;text-shadow:0.30px 0 0 #1f1f24,-0.30px 0 0 #1f1f24,0 0.30px 0 #1f1f24,0 -0.30px 0 #1f1f24;">30D</span>
<span class="t" style="left:1267.7px;top:203.5px;font-size:28px;color:#8b8b90;text-shadow:0.30px 0 0 #8b8b90,-0.30px 0 0 #8b8b90,0 0.30px 0 #8b8b90,0 -0.30px 0 #8b8b90;transform:scaleX(0.9570);transform-origin:0 0;">3M</span>
<span class="t" style="left:1353.8px;top:203.5px;font-size:28px;color:#8b8b90;letter-spacing:-0.57px;text-shadow:0.30px 0 0 #8b8b90,-0.30px 0 0 #8b8b90,0 0.30px 0 #8b8b90,0 -0.30px 0 #8b8b90;">6M</span>
<span class="t" style="left:1452.1px;top:203.5px;font-size:28px;color:#8b8b90;text-shadow:0.30px 0 0 #8b8b90,-0.30px 0 0 #8b8b90,0 0.30px 0 #8b8b90,0 -0.30px 0 #8b8b90;transform:scaleX(0.8887);transform-origin:0 0;">2M</span>
<span class="t" style="left:1538.5px;top:203.5px;font-size:28px;color:#8b8b90;text-shadow:0.30px 0 0 #8b8b90,-0.30px 0 0 #8b8b90,0 0.30px 0 #8b8b90,0 -0.30px 0 #8b8b90;transform:scaleX(0.8762);transform-origin:0 0;">XTD</span>
<span class="t" style="left:601.5px;top:281.2px;font-size:28px;color:#1f1f24;letter-spacing:0.32px;text-shadow:0.40px 0 0 #1f1f24,-0.40px 0 0 #1f1f24,0 0.40px 0 #1f1f24,0 -0.40px 0 #1f1f24;">Compare</span>
<span class="t" style="left:1752.0px;top:281.2px;font-size:28px;color:#1f1f24;letter-spacing:-0.45px;text-shadow:0.40px 0 0 #1f1f24,-0.40px 0 0 #1f1f24,0 0.40px 0 #1f1f24,0 -0.40px 0 #1f1f24;">Funnel Steps</span>
<span class="t" style="left:853.5px;top:380.8px;font-size:23.5px;color:#5c5c62;letter-spacing:-0.30px;text-shadow:0.17px 0 0 #5c5c62,-0.17px 0 0 #5c5c62,0 0.17px 0 #5c5c62,0 -0.17px 0 #5c5c62;">High • 3.5%</span>
<span class="t" style="left:1033.3px;top:380.8px;font-size:23.5px;color:#5c5c62;letter-spacing:0.26px;text-shadow:0.17px 0 0 #5c5c62,-0.17px 0 0 #5c5c62,0 0.17px 0 #5c5c62,0 -0.17px 0 #5c5c62;">Low / Medium • 4.58%</span>
<span class="t" style="left:1331.5px;top:380.8px;font-size:23.5px;color:#5c5c62;letter-spacing:-0.10px;text-shadow:0.17px 0 0 #5c5c62,-0.17px 0 0 #5c5c62,0 0.17px 0 #5c5c62,0 -0.17px 0 #5c5c62;">Medium • 4.62%</span>
<span class="t" style="left:1560.5px;top:380.8px;font-size:23.5px;color:#5c5c62;letter-spacing:0.06px;text-shadow:0.17px 0 0 #5c5c62,-0.17px 0 0 #5c5c62,0 0.17px 0 #5c5c62,0 -0.17px 0 #5c5c62;">(not set) • 0%</span>
<span class="t m" style="left:572.4px;top:566.5px;font-size:24.3px;color:#5c5c62;letter-spacing:-0.28px;">75%</span>
<span class="t m" style="left:572.4px;top:667.3px;font-size:24.3px;color:#5c5c62;letter-spacing:-0.28px;">50%</span>
<span class="t m" style="left:572.4px;top:768.3px;font-size:24.3px;color:#5c5c62;letter-spacing:-0.28px;">25%</span>
<span class="t m" style="left:587.0px;top:869.7px;font-size:24.3px;color:#5c5c62;letter-spacing:-0.58px;">0%</span>
<span class="t m" style="left:690.0px;top:450.0px;font-size:24.2px;color:#1f1f24;letter-spacing:-0.21px;z-index:4;">100%</span>
<span class="t m" style="left:701.2px;top:482.0px;font-size:20.2px;color:#5c5c62;letter-spacing:-0.31px;z-index:4;">371</span>
<span class="t m" style="left:813.0px;top:450.0px;font-size:24.2px;color:#1f1f24;letter-spacing:-0.21px;z-index:4;">100%</span>
<span class="t m" style="left:824.2px;top:482.0px;font-size:20.2px;color:#5c5c62;letter-spacing:-0.31px;z-index:4;">284</span>
<span class="t m" style="left:936.0px;top:450.0px;font-size:24.2px;color:#1f1f24;letter-spacing:-0.21px;z-index:4;">100%</span>
<span class="t m" style="left:947.2px;top:482.0px;font-size:20.2px;color:#5c5c62;letter-spacing:0.19px;z-index:4;">260</span>
<span class="t m" style="left:1059.0px;top:450.0px;font-size:24.2px;color:#1f1f24;letter-spacing:-0.21px;z-index:4;">100%</span>
<span class="t m" style="left:1082.3px;top:482.0px;font-size:20.2px;color:#5c5c62;z-index:4;">6</span>
<span class="t m" style="left:1214.9px;top:821.2px;font-size:24.2px;color:#1f1f24;letter-spacing:-0.15px;z-index:4;">8.09%</span>
<span class="t m" style="left:1239.3px;top:853.2px;font-size:20.2px;color:#5c5c62;letter-spacing:0.39px;z-index:4;">30</span>
<span class="t m" style="left:1330.3px;top:806.4px;font-size:24.2px;color:#1f1f24;letter-spacing:-0.11px;z-index:4;">11.97%</span>
<span class="t m" style="left:1362.0px;top:838.4px;font-size:20.2px;color:#5c5c62;letter-spacing:-0.61px;z-index:4;">34</span>
<span class="t m" style="left:1453.5px;top:812.1px;font-size:24.2px;color:#1f1f24;letter-spacing:-0.11px;z-index:4;">10.38%</span>
<span class="t m" style="left:1485.2px;top:844.1px;font-size:20.2px;color:#5c5c62;letter-spacing:0.39px;z-index:4;">27</span>
<span class="t m" style="left:1605.8px;top:842.3px;font-size:24.2px;color:#1f1f24;letter-spacing:-0.71px;z-index:4;">0%</span>
<span class="t m" style="left:1614.5px;top:874.3px;font-size:20.2px;color:#5c5c62;z-index:4;">0</span>
<span class="t m" style="left:1754.0px;top:821.2px;font-size:24.2px;color:#1f1f24;letter-spacing:-0.21px;z-index:4;">100%</span>
<span class="t m" style="left:1771.2px;top:853.2px;font-size:20.2px;color:#5c5c62;letter-spacing:0.39px;z-index:4;">30</span>
<span class="t m" style="left:1877.0px;top:806.4px;font-size:24.2px;color:#1f1f24;letter-spacing:-0.21px;z-index:4;">100%</span>
<span class="t m" style="left:1894.2px;top:838.4px;font-size:20.2px;color:#5c5c62;letter-spacing:-0.61px;z-index:4;">34</span>
<span class="t" style="left:688.6px;top:911.3px;font-size:31.3px;color:#26262c;letter-spacing:0.44px;text-shadow:0.45px 0 0 #26262c,-0.45px 0 0 #26262c,0 0.45px 0 #26262c,0 -0.45px 0 #26262c;">Component Viewed</span>
<span class="t" style="left:1195.4px;top:911.3px;font-size:31.3px;color:#8b8b90;text-shadow:0.25px 0 0 #8b8b90,-0.25px 0 0 #8b8b90,0 0.25px 0 #8b8b90,0 -0.25px 0 #8b8b90;">2</span>
<span class="t" style="left:1225.0px;top:911.3px;font-size:31.3px;color:#26262c;letter-spacing:0.19px;text-shadow:0.45px 0 0 #26262c,-0.45px 0 0 #26262c,0 0.45px 0 #26262c,0 -0.45px 0 #26262c;">Clicked into Care Guide Chat</span>
<span class="t" style="left:1727.6px;top:911.3px;font-size:31.3px;color:#8b8b90;text-shadow:0.25px 0 0 #8b8b90,-0.25px 0 0 #8b8b90,0 0.25px 0 #8b8b90,0 -0.25px 0 #8b8b90;">3</span>
<span class="t" style="left:1758.0px;top:911.3px;font-size:31.3px;color:#26262c;text-shadow:0.45px 0 0 #26262c,-0.45px 0 0 #26262c,0 0.45px 0 #26262c,0 -0.45px 0 #26262c;transform:scaleX(0.9544);transform-origin:0 0;">Sent message</span>
<span class="t" style="left:680.4px;top:1087.0px;font-size:30.5px;color:#8b8b90;text-shadow:0.25px 0 0 #8b8b90,-0.25px 0 0 #8b8b90,0 0.25px 0 #8b8b90,0 -0.25px 0 #8b8b90;">3</span>
<span class="t" style="left:710.5px;top:1087.0px;font-size:30.5px;color:#26262c;letter-spacing:-0.38px;text-shadow:0.45px 0 0 #26262c,-0.45px 0 0 #26262c,0 0.45px 0 #26262c,0 -0.45px 0 #26262c;">Sent message</span>
<span class="t" style="left:1340.7px;top:1087.0px;font-size:30.5px;color:#8b8b90;text-shadow:0.25px 0 0 #8b8b90,-0.25px 0 0 #8b8b90,0 0.25px 0 #8b8b90,0 -0.25px 0 #8b8b90;">4</span>
<span class="t" style="left:1371.0px;top:1087.0px;font-size:30.5px;color:#26262c;letter-spacing:0.89px;text-shadow:0.45px 0 0 #26262c,-0.45px 0 0 #26262c,0 0.45px 0 #26262c,0 -0.45px 0 #26262c;">Appointment Directly Scheduled</span>
<span class="t m" style="left:590.8px;top:1285.7px;font-size:26px;color:#1f1f24;letter-spacing:1.10px;">30</span>
<span class="t m" style="left:811.8px;top:1285.7px;font-size:26px;color:#1f1f24;letter-spacing:1.10px;">6s</span>
<span class="t m" style="left:1002.3px;top:1285.7px;font-size:26px;color:#1f1f24;letter-spacing:-0.20px;">100%</span>
<span class="t m" style="left:1250.3px;top:1285.7px;font-size:26px;color:#1f1f24;letter-spacing:1.10px;">30</span>
<span class="t m" style="left:1427.0px;top:1285.7px;font-size:26px;color:#1f1f24;letter-spacing:0.13px;">20.9m</span>
<span class="t m" style="left:1630.8px;top:1285.7px;font-size:26px;color:#1f1f24;letter-spacing:-0.06px;">43.33%</span>
<span class="t m" style="left:1912.8px;top:1285.7px;font-size:26px;color:#1f1f24;letter-spacing:1.10px;">13</span>
<span class="t m" style="left:590.8px;top:1356.1px;font-size:26px;color:#5c5c62;letter-spacing:0.10px;">34</span>
<span class="t m" style="left:811.8px;top:1356.1px;font-size:26px;color:#5c5c62;letter-spacing:1.10px;">6s</span>
<span class="t m" style="left:1002.3px;top:1356.1px;font-size:26px;color:#5c5c62;letter-spacing:-0.20px;">100%</span>
<span class="t m" style="left:1250.3px;top:1356.1px;font-size:26px;color:#5c5c62;letter-spacing:0.10px;">34</span>
<span class="t m" style="left:1427.0px;top:1356.1px;font-size:26px;color:#5c5c62;letter-spacing:0.13px;">20.9m</span>
<span class="t m" style="left:1630.8px;top:1356.1px;font-size:26px;color:#5c5c62;letter-spacing:-0.06px;">38.24%</span>
<span class="t m" style="left:1912.8px;top:1356.1px;font-size:26px;color:#5c5c62;letter-spacing:1.10px;">13</span>
<span class="t m" style="left:590.8px;top:1426.1px;font-size:26px;color:#5c5c62;letter-spacing:1.10px;">27</span>
<span class="t m" style="left:811.8px;top:1426.1px;font-size:26px;color:#5c5c62;letter-spacing:1.10px;">8s</span>
<span class="t m" style="left:1002.3px;top:1426.1px;font-size:26px;color:#5c5c62;letter-spacing:-0.20px;">100%</span>
<span class="t m" style="left:1250.3px;top:1426.1px;font-size:26px;color:#5c5c62;letter-spacing:1.10px;">27</span>
<span class="t m" style="left:1427.0px;top:1426.1px;font-size:26px;color:#5c5c62;letter-spacing:0.13px;">27.1m</span>
<span class="t m" style="left:1630.8px;top:1426.1px;font-size:26px;color:#5c5c62;letter-spacing:-0.06px;">44.44%</span>
<span class="t m" style="left:1912.8px;top:1426.1px;font-size:26px;color:#5c5c62;letter-spacing:1.10px;">12</span>
<span class="t m" style="left:606.5px;top:1495.4px;font-size:26px;color:#5c5c62;">0</span>
<span class="t m" style="left:823.0px;top:1495.4px;font-size:26px;color:#5c5c62;">-</span>
<span class="t m" style="left:1033.8px;top:1495.4px;font-size:26px;color:#5c5c62;letter-spacing:-0.90px;">0%</span>
<span class="t m" style="left:1266.0px;top:1495.4px;font-size:26px;color:#5c5c62;">0</span>
<span class="t m" style="left:1485.5px;top:1495.4px;font-size:26px;color:#5c5c62;">-</span>
<span class="t m" style="left:1693.8px;top:1495.4px;font-size:26px;color:#5c5c62;letter-spacing:-0.90px;">0%</span>
<span class="t m" style="left:1928.5px;top:1495.4px;font-size:26px;color:#5c5c62;">0</span>
<span class="t" style="left:2057.6px;top:141.8px;font-size:28px;color:#4d45da;letter-spacing:0.19px;text-shadow:0.40px 0 0 #4d45da,-0.40px 0 0 #4d45da,0 0.40px 0 #4d45da,0 -0.40px 0 #4d45da;">Query</span>
<span class="t" style="left:2183.0px;top:141.8px;font-size:28px;color:#8b8b90;letter-spacing:0.33px;text-shadow:0.20px 0 0 #8b8b90,-0.20px 0 0 #8b8b90,0 0.20px 0 #8b8b90,0 -0.20px 0 #8b8b90;">Chart</span>
<span class="t" style="left:2302.0px;top:141.8px;font-size:28px;color:#8b8b90;letter-spacing:0.07px;text-shadow:0.20px 0 0 #8b8b90,-0.20px 0 0 #8b8b90,0 0.20px 0 #8b8b90,0 -0.20px 0 #8b8b90;">Annotations</span>
<span class="t" style="left:2089.8px;top:361.2px;font-size:29px;color:#1f1f24;font-weight:bold;transform:scaleX(0.9408);transform-origin:0 0;">Metric</span>
<span class="t" style="left:2184.0px;top:454.7px;font-size:27.5px;color:#8b8b90;letter-spacing:0.32px;text-shadow:0.17px 0 0 #8b8b90,-0.17px 0 0 #8b8b90,0 0.17px 0 #8b8b90,0 -0.17px 0 #8b8b90;">Conversion Rate of Component Vi...</span>
<span class="t" style="left:2184.0px;top:529.8px;font-size:28px;color:#26262c;letter-spacing:0.28px;text-shadow:0.38px 0 0 #26262c,-0.38px 0 0 #26262c,0 0.38px 0 #26262c,0 -0.38px 0 #26262c;">Component Viewed</span>
<span class="t" style="left:2439.7px;top:529.8px;font-size:28px;color:#8b8b90;letter-spacing:0.79px;text-shadow:0.15px 0 0 #8b8b90,-0.15px 0 0 #8b8b90,0 0.15px 0 #8b8b90,0 -0.15px 0 #8b8b90;">then</span>
<span class="t" style="left:2145.2px;top:603.1px;font-size:23px;color:#3f9a69;text-shadow:0.15px 0 0 #3f9a69,-0.15px 0 0 #3f9a69,0 0.15px 0 #3f9a69,0 -0.15px 0 #3f9a69;transform:scaleX(0.9139);transform-origin:0 0;">Aa</span>
<span class="t" style="left:2189.8px;top:601.1px;font-size:26.8px;color:#26262c;letter-spacing:0.16px;text-shadow:0.33px 0 0 #26262c,-0.33px 0 0 #26262c,0 0.33px 0 #26262c,0 -0.33px 0 #26262c;">page</span>
<span class="t" style="left:2189.0px;top:663.8px;font-size:24.5px;color:#5c5c62;text-shadow:0.25px 0 0 #5c5c62,-0.25px 0 0 #5c5c62,0 0.25px 0 #5c5c62,0 -0.25px 0 #5c5c62;transform:scaleX(0.8925);transform-origin:0 0;">Is</span>
<span class="t" style="left:2235.5px;top:663.8px;font-size:24.5px;color:#5c5c62;letter-spacing:-0.14px;text-shadow:0.25px 0 0 #5c5c62,-0.25px 0 0 #5c5c62,0 0.25px 0 #5c5c62,0 -0.25px 0 #5c5c62;">/members/your_assessment_results</span>
<span class="t" style="left:2206.7px;top:719.3px;font-size:25px;color:#5c5c62;text-shadow:0.25px 0 0 #5c5c62,-0.25px 0 0 #5c5c62,0 0.25px 0 #5c5c62,0 -0.25px 0 #5c5c62;transform:scaleX(0.9481);transform-origin:0 0;">And all</span>
<span class="t" style="left:2145.2px;top:769.1px;font-size:23px;color:#3f9a69;text-shadow:0.15px 0 0 #3f9a69,-0.15px 0 0 #3f9a69,0 0.15px 0 #3f9a69,0 -0.15px 0 #3f9a69;transform:scaleX(0.9139);transform-origin:0 0;">Aa</span>
<span class="t" style="left:2189.8px;top:767.1px;font-size:26.8px;color:#26262c;letter-spacing:0.79px;text-shadow:0.33px 0 0 #26262c,-0.33px 0 0 #26262c,0 0.33px 0 #26262c,0 -0.33px 0 #26262c;">ai_chat_type</span>
<span class="t" style="left:2189.0px;top:828.2px;font-size:24.5px;color:#5c5c62;text-shadow:0.25px 0 0 #5c5c62,-0.25px 0 0 #5c5c62,0 0.25px 0 #5c5c62,0 -0.25px 0 #5c5c62;transform:scaleX(0.8925);transform-origin:0 0;">Is</span>
<span class="t" style="left:2234.5px;top:828.2px;font-size:24.5px;color:#5c5c62;letter-spacing:-0.41px;text-shadow:0.25px 0 0 #5c5c62,-0.25px 0 0 #5c5c62,0 0.25px 0 #5c5c62,0 -0.25px 0 #5c5c62;">Care Guide</span>
<span class="t" style="left:2145.2px;top:909.1px;font-size:23px;color:#3f9a69;text-shadow:0.15px 0 0 #3f9a69,-0.15px 0 0 #3f9a69,0 0.15px 0 #3f9a69,0 -0.15px 0 #3f9a69;transform:scaleX(0.9139);transform-origin:0 0;">Aa</span>
<span class="t" style="left:2190.8px;top:907.1px;font-size:26.8px;color:#26262c;letter-spacing:1.42px;text-shadow:0.33px 0 0 #26262c,-0.33px 0 0 #26262c,0 0.33px 0 #26262c,0 -0.33px 0 #26262c;">type</span>
<span class="t" style="left:2189.0px;top:968.2px;font-size:24.5px;color:#5c5c62;text-shadow:0.25px 0 0 #5c5c62,-0.25px 0 0 #5c5c62,0 0.25px 0 #5c5c62,0 -0.25px 0 #5c5c62;transform:scaleX(0.8925);transform-origin:0 0;">Is</span>
<span class="t" style="left:2235.5px;top:968.2px;font-size:24.5px;color:#5c5c62;text-shadow:0.25px 0 0 #5c5c62,-0.25px 0 0 #5c5c62,0 0.25px 0 #5c5c62,0 -0.25px 0 #5c5c62;transform:scaleX(0.9438);transform-origin:0 0;">AI Chat</span>
<span class="t" style="left:2184.0px;top:1032.0px;font-size:28px;color:#26262c;letter-spacing:0.04px;text-shadow:0.38px 0 0 #26262c,-0.38px 0 0 #26262c,0 0.38px 0 #26262c,0 -0.38px 0 #26262c;">Clicked into Care Guide Chat (But...</span>
<span class="t" style="left:2145.2px;top:1107.8px;font-size:23px;color:#3f9a69;text-shadow:0.15px 0 0 #3f9a69,-0.15px 0 0 #3f9a69,0 0.15px 0 #3f9a69,0 -0.15px 0 #3f9a69;transform:scaleX(0.9139);transform-origin:0 0;">Aa</span>
<span class="t" style="left:2189.8px;top:1105.8px;font-size:26.8px;color:#26262c;letter-spacing:0.16px;text-shadow:0.33px 0 0 #26262c,-0.33px 0 0 #26262c,0 0.33px 0 #26262c,0 -0.33px 0 #26262c;">page</span>
<span class="t" style="left:2189.0px;top:1167.0px;font-size:24.5px;color:#5c5c62;text-shadow:0.25px 0 0 #5c5c62,-0.25px 0 0 #5c5c62,0 0.25px 0 #5c5c62,0 -0.25px 0 #5c5c62;transform:scaleX(0.8925);transform-origin:0 0;">Is</span>
<span class="t" style="left:2235.5px;top:1167.0px;font-size:24.5px;color:#5c5c62;letter-spacing:-0.14px;text-shadow:0.25px 0 0 #5c5c62,-0.25px 0 0 #5c5c62,0 0.25px 0 #5c5c62,0 -0.25px 0 #5c5c62;">/members/your_assessment_results</span>
<span class="t" style="left:2206.7px;top:1222.4px;font-size:25px;color:#5c5c62;text-shadow:0.25px 0 0 #5c5c62,-0.25px 0 0 #5c5c62,0 0.25px 0 #5c5c62,0 -0.25px 0 #5c5c62;transform:scaleX(0.9481);transform-origin:0 0;">And all</span>
<span class="t" style="left:2145.2px;top:1272.0px;font-size:23px;color:#3f9a69;text-shadow:0.15px 0 0 #3f9a69,-0.15px 0 0 #3f9a69,0 0.15px 0 #3f9a69,0 -0.15px 0 #3f9a69;transform:scaleX(0.9139);transform-origin:0 0;">Aa</span>
<span class="t" style="left:2189.8px;top:1270.0px;font-size:26.8px;color:#26262c;letter-spacing:0.79px;text-shadow:0.33px 0 0 #26262c,-0.33px 0 0 #26262c,0 0.33px 0 #26262c,0 -0.33px 0 #26262c;">ai_chat_type</span>
<span class="t" style="left:2189.0px;top:1331.2px;font-size:24.5px;color:#5c5c62;text-shadow:0.25px 0 0 #5c5c62,-0.25px 0 0 #5c5c62,0 0.25px 0 #5c5c62,0 -0.25px 0 #5c5c62;transform:scaleX(0.8925);transform-origin:0 0;">Is</span>
<span class="t" style="left:2234.5px;top:1331.2px;font-size:24.5px;color:#5c5c62;letter-spacing:-0.41px;text-shadow:0.25px 0 0 #5c5c62,-0.25px 0 0 #5c5c62,0 0.25px 0 #5c5c62,0 -0.25px 0 #5c5c62;">Care Guide</span>
<span class="t" style="left:2183.7px;top:1394.7px;font-size:28px;color:#26262c;letter-spacing:-0.27px;text-shadow:0.38px 0 0 #26262c,-0.38px 0 0 #26262c,0 0.38px 0 #26262c,0 -0.38px 0 #26262c;">Sent message (Button Clicked)</span>
<span class="t" style="left:2569.0px;top:1394.7px;font-size:28px;color:#8b8b90;letter-spacing:0.93px;text-shadow:0.15px 0 0 #8b8b90,-0.15px 0 0 #8b8b90,0 0.15px 0 #8b8b90,0 -0.15px 0 #8b8b90;">then</span>
<span class="t" style="left:2145.2px;top:1470.3px;font-size:23px;color:#3f9a69;text-shadow:0.15px 0 0 #3f9a69,-0.15px 0 0 #3f9a69,0 0.15px 0 #3f9a69,0 -0.15px 0 #3f9a69;transform:scaleX(0.9139);transform-origin:0 0;">Aa</span>
<span class="t" style="left:2189.8px;top:1468.3px;font-size:26.8px;color:#26262c;letter-spacing:0.16px;text-shadow:0.33px 0 0 #26262c,-0.33px 0 0 #26262c,0 0.33px 0 #26262c,0 -0.33px 0 #26262c;">page</span>
<span class="t" style="left:2189.0px;top:1528.9px;font-size:24.5px;color:#5c5c62;text-shadow:0.25px 0 0 #5c5c62,-0.25px 0 0 #5c5c62,0 0.25px 0 #5c5c62,0 -0.25px 0 #5c5c62;transform:scaleX(0.8925);transform-origin:0 0;">Is</span>
<span class="t" style="left:2235.5px;top:1528.9px;font-size:24.5px;color:#5c5c62;letter-spacing:-0.14px;text-shadow:0.25px 0 0 #5c5c62,-0.25px 0 0 #5c5c62,0 0.25px 0 #5c5c62,0 -0.25px 0 #5c5c62;">/members/your_assessment_results</span>
</body></html>
